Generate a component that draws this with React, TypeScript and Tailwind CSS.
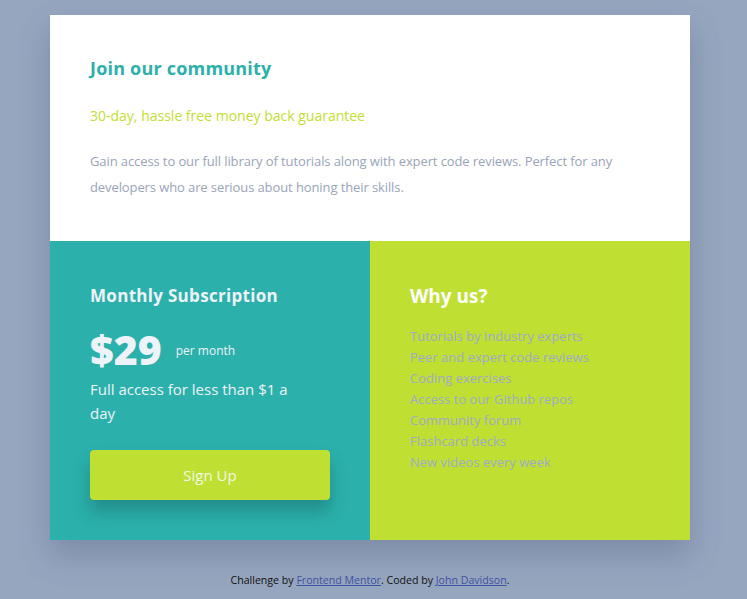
const features = [
  'Tutorials by industry experts',
  'Peer and expert code reviews',
  'Coding exercises',
  'Access to our Github repos',
  'Community forum',
  'Flashcard decks',
  'New videos every week',
];

export default function App() {
  return (
    <div className="min-h-[599px] bg-[#97a6bf] pt-[15px] font-['Open_Sans',sans-serif]">
      <div className="w-[740px]">
        <main className="mx-auto w-[640px] shadow-[0_15px_30px_rgba(60,75,110,0.3)]">
          <section className="bg-white h-[226px] px-10 pt-[44px]">
            <h1 className="text-[18px] font-bold leading-none text-[#2bb0aa] tracking-[0.2px]">Join our community</h1>
            <p className="mt-[32px] text-[14px] leading-none text-[#bfdf32]">30-day, hassle free money back guarantee</p>
            <p className="mt-[25px] text-[13px] leading-[26px] text-[#99a4ba] tracking-[-0.1px]">
              Gain access to our full library of tutorials along with expert code reviews. Perfect for any developers who
              are serious about honing their skills.
            </p>
          </section>
          <div className="flex h-[299px]">
            <section className="w-1/2 bg-[#2bb0ab] px-10 pt-[46px] text-[#edf3f8]">
              <h2 className="text-[17px] font-bold leading-none tracking-[0.3px]">Monthly Subscription</h2>
              <div className="mt-[25px] flex items-center gap-[14px]">
                <span className="text-[41px] font-extrabold leading-none">$29</span>
                <span className="text-[12px] pt-[2px]">per month</span>
              </div>
              <p className="mt-[7px] text-[15px] leading-[24px] w-[222px]">Full access for less than $1 a day</p>
              <button className="mt-[25px] h-[50px] w-[240px] rounded bg-[#bfe032] text-[15px] text-[#f3f6e6] shadow-[0_12px_16px_rgba(20,80,80,0.35)]">
                Sign Up
              </button>
            </section>
            <section className="w-1/2 bg-[#bfe032] px-10 pt-[46px]">
              <h2 className="text-[19px] font-bold leading-none text-white">Why us?</h2>
              <ul className="mt-[20px] text-[13px] leading-[21px] text-[#a0aac6]">
                {features.map((f) => (
                  <li key={f}>{f}</li>
                ))}
              </ul>
            </section>
          </div>
        </main>
        <footer className="mt-[33px] text-center text-[10.6px] text-[#111] pb-4">
          Challenge by{' '}
          <a href="#" className="text-[#3e52a3] underline">
            Frontend Mentor
          </a>
          . Coded by{' '}
          <a href="#" className="text-[#3e52a3] underline">
            John Davidson
          </a>
          .
        </footer>
      </div>
    </div>
  );
}
